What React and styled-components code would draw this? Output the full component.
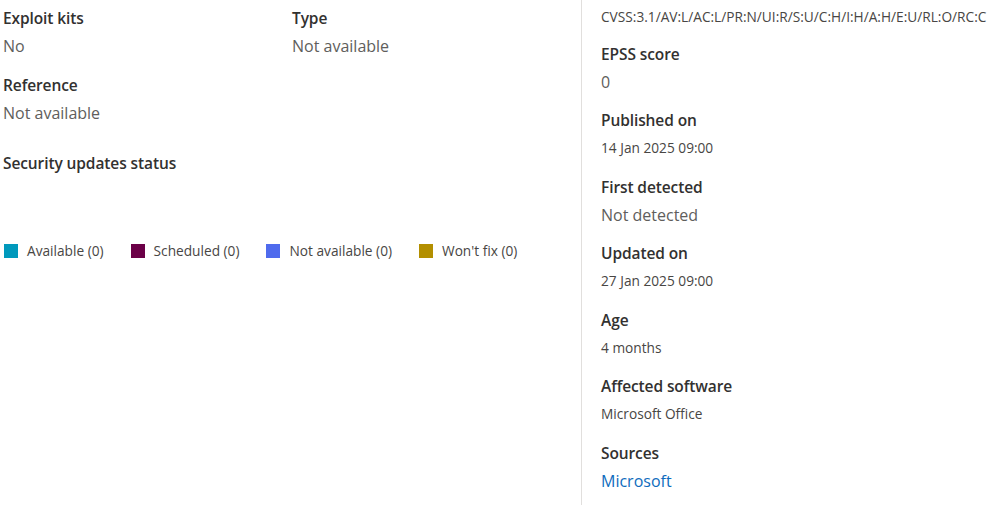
import React from "react";
import styled, { createGlobalStyle } from "styled-components";

const GlobalStyle = createGlobalStyle`
  html, body {
    margin: 0;
    padding: 0;
    background: #ffffff;
  }
  body {
    font-family: "Open Sans", "Noto Sans", sans-serif;
    color: #323130;
  }
`;

const legend = [
  { label: "Available (0)", color: "#0099bc" },
  { label: "Scheduled (0)", color: "#6b0047" },
  { label: "Not available (0)", color: "#4f6bed" },
  { label: "Won't fix (0)", color: "#b38f00" },
];

const sideFields = [
  { label: "EPSS score", value: "0" },
  { label: "Published on", value: "14 Jan 2025 09:00", small: true },
  { label: "First detected", value: "Not detected" },
  { label: "Updated on", value: "27 Jan 2025 09:00", small: true },
  { label: "Age", value: "4 months", small: true },
  { label: "Affected software", value: "Microsoft Office", small: true },
  { label: "Sources", value: "Microsoft", link: true },
];

function App() {
  return (
    <>
      <GlobalStyle />
      <Page>
        <Main>
          <FieldGrid>
            <Field>
              <Label>Exploit kits</Label>
              <Value>No</Value>
            </Field>
            <Field>
              <Label>Type</Label>
              <Value>Not available</Value>
            </Field>
            <Field>
              <Label>Reference</Label>
              <Value>Not available</Value>
            </Field>
          </FieldGrid>
          <SectionTitle>Security updates status</SectionTitle>
          <Legend>
            {legend.map((item) => (
              <LegendItem key={item.label}>
                <Swatch color={item.color} />
                {item.label}
              </LegendItem>
            ))}
          </Legend>
        </Main>
        <Side>
          <Vector>CVSS:3.1/AV:L/AC:L/PR:N/UI:R/S:U/C:H/I:H/A:H/E:U/RL:O/RC:C</Vector>
          {sideFields.map((f) => (
            <SideField key={f.label}>
              <Label>{f.label}</Label>
              {f.link ? (
                <Link href="#">{f.value}</Link>
              ) : (
                <Value small={f.small}>{f.value}</Value>
              )}
            </SideField>
          ))}
        </Side>
      </Page>
    </>
  );
}

const Page = styled.div`
  display: flex;
  width: 998px;
  height: 505px;
  overflow: hidden;
`;

const Main = styled.section`
  width: 582px;
  flex-shrink: 0;
  padding: 7px 0 0 3px;
  box-sizing: border-box;
  border-right: 1px solid #e1dfdd;
`;

const FieldGrid = styled.div`
  display: grid;
  grid-template-columns: 289px 1fr;
  row-gap: 17px;
`;

const Field = styled.div`
  display: flex;
  flex-direction: column;
  gap: 6px;
`;

const Label = styled.div`
  font-size: 15.5px;
  font-weight: 600;
  line-height: 22px;
  color: #323130;
  letter-spacing: -0.1px;
`;

const Value = styled.div`
  font-size: ${(p) => (p.small ? "13.7px" : "16px")};
  line-height: 22px;
  color: ${(p) => (p.small ? "#484644" : "#605e5c")};
`;

const Link = styled.a`
  font-size: 16px;
  line-height: 22px;
  color: #0f6cbd;
  text-decoration: none;
`;

const SectionTitle = styled.h3`
  margin: 28px 0 0;
  font-size: 15.5px;
  font-weight: 600;
  line-height: 22px;
  color: #323130;
  letter-spacing: -0.1px;
`;

const Legend = styled.div`
  display: flex;
  align-items: center;
  gap: 27px;
  margin-top: 68px;
  padding-left: 1px;
`;

const LegendItem = styled.div`
  display: flex;
  align-items: center;
  gap: 9px;
  font-size: 13.7px;
  line-height: 18px;
  color: #484644;
`;

const Swatch = styled.span`
  width: 14px;
  height: 14px;
  background: ${(p) => p.color};
`;

const Side = styled.aside`
  flex: 1;
  padding: 7px 0 0 19px;
  display: flex;
  flex-direction: column;
  gap: 16.5px;
`;

const Vector = styled.div`
  font-size: 13.7px;
  line-height: 19px;
  color: #484644;
  white-space: nowrap;
`;

const SideField = styled.div`
  display: flex;
  flex-direction: column;
  gap: 6px;
`;

export default App;
